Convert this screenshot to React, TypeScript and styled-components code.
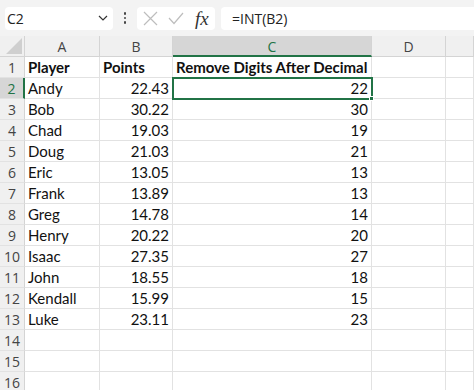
import React from "react";
import styled, { createGlobalStyle } from "styled-components";

const Global = createGlobalStyle`
  html, body { margin: 0; padding: 0; background: #ffffff; overflow: hidden; }
  body { font-family: "Lato", "Open Sans", sans-serif; }
`;

const Page = styled.div`
  width: 474px;
  height: 390px;
  overflow: hidden;
  display: flex;
  flex-direction: column;
  background: #fff;
`;

const Toolbar = styled.div`
  height: 36px;
  flex: 0 0 36px;
  background: #f3f3f3;
  display: flex;
  align-items: center;
  padding: 0 0 0 5px;
  box-sizing: border-box;
`;

const NameBox = styled.div`
  width: 108px;
  height: 23px;
  background: #fff;
  border-radius: 4px;
  display: flex;
  align-items: center;
  justify-content: space-between;
  padding: 0 5px 0 2px;
  box-sizing: border-box;
  font-family: "Open Sans", sans-serif;
  font-size: 14px;
  color: #222;
`;

const Dots = styled.div`
  width: 24px;
  display: flex;
  flex-direction: column;
  align-items: center;
  gap: 2px;
  span {
    width: 2.5px;
    height: 2.5px;
    border-radius: 50%;
    background: #444;
  }
`;

const IconBox = styled.div`
  width: 78px;
  height: 23px;
  background: #fff;
  border-radius: 4px;
  display: flex;
  align-items: center;
  padding: 0 0 0 6px;
  gap: 10px;
  box-sizing: border-box;
`;

const Fx = styled.span`
  font-family: "Liberation Serif", serif;
  font-style: italic;
  font-size: 19px;
  color: #333;
  margin-left: 1px;
  line-height: 1;
`;

const FormulaBox = styled.div`
  margin-left: 6px;
  flex: 1;
  height: 23px;
  background: #fff;
  border-radius: 4px 0 0 4px;
  display: flex;
  align-items: center;
  padding-left: 11px;
  font-family: "Open Sans", sans-serif;
  font-size: 14px;
  color: #222;
`;

const Grid = styled.div`
  display: grid;
  grid-template-columns: 25px 75px 73px 199px 74px 28px;
  grid-auto-rows: 21px;
`;

const Corner = styled.div`
  background: #f0f0f0;
  border-right: 1px solid #d4d4d4;
  border-bottom: 1px solid #d4d4d4;
  box-sizing: border-box;
  position: relative;
  svg { position: absolute; right: 2px; bottom: 2px; }
`;

const ColHead = styled.div<{ $sel?: boolean }>`
  background: ${(p) => (p.$sel ? "#d6d6d6" : "#f0f0f0")};
  border-right: 1px solid #d4d4d4;
  border-bottom: ${(p) => (p.$sel ? "2px solid #217346" : "1px solid #d4d4d4")};
  box-sizing: border-box;
  display: flex;
  align-items: center;
  justify-content: center;
  font-family: "Open Sans", sans-serif;
  font-size: 14px;
  color: ${(p) => (p.$sel ? "#217346" : "#444")};
  padding-top: ${(p) => (p.$sel ? "1px" : "0")};
`;

const RowHead = styled.div<{ $sel?: boolean }>`
  background: ${(p) => (p.$sel ? "#d6d6d6" : "#f0f0f0")};
  border-right: ${(p) => (p.$sel ? "2px solid #217346" : "1px solid #d4d4d4")};
  border-bottom: 1px solid #e2e2e2;
  box-sizing: border-box;
  display: flex;
  align-items: center;
  justify-content: center;
  font-family: "Open Sans", sans-serif;
  font-size: 14px;
  color: ${(p) => (p.$sel ? "#217346" : "#444")};
`;

const Cell = styled.div<{ $right?: boolean; $bold?: boolean; $sel?: boolean }>`
  border-right: 1px solid #e2e2e2;
  border-bottom: 1px solid #e2e2e2;
  box-sizing: border-box;
  display: flex;
  align-items: center;
  justify-content: ${(p) => (p.$right ? "flex-end" : "flex-start")};
  padding: 0 3px;
  font-family: "Lato", "Open Sans", sans-serif;
  font-size: 15px;
  font-weight: ${(p) => (p.$bold ? 700 : 400)};
  color: #111;
  white-space: nowrap;
  overflow: visible;
  position: relative;
  ${(p) =>
    p.$sel
      ? `outline: 2px solid #217346; outline-offset: -1px; z-index: 1;`
      : ""}
`;

const Handle = styled.span`
  position: absolute;
  right: -3px;
  bottom: -3px;
  width: 5px;
  height: 5px;
  background: #217346;
  border: 1px solid #fff;
  box-sizing: border-box;
`;

const data: [string, string, string][] = [
  ["Andy", "22.43", "22"],
  ["Bob", "30.22", "30"],
  ["Chad", "19.03", "19"],
  ["Doug", "21.03", "21"],
  ["Eric", "13.05", "13"],
  ["Frank", "13.89", "13"],
  ["Greg", "14.78", "14"],
  ["Henry", "20.22", "20"],
  ["Isaac", "27.35", "27"],
  ["John", "18.55", "18"],
  ["Kendall", "15.99", "15"],
  ["Luke", "23.11", "23"],
];

export default function App() {
  const rows: React.ReactNode[] = [];
  rows.push(
    <React.Fragment key="r1">
      <RowHead>1</RowHead>
      <Cell $bold>Player</Cell>
      <Cell $bold>Points</Cell>
      <Cell $bold>Remove Digits After Decimal</Cell>
      <Cell />
      <Cell />
    </React.Fragment>
  );
  data.forEach((d, i) => {
    const sel = i === 0;
    rows.push(
      <React.Fragment key={i}>
        <RowHead $sel={sel}>{i + 2}</RowHead>
        <Cell>{d[0]}</Cell>
        <Cell $right>{d[1]}</Cell>
        <Cell $right $sel={sel}>
          {d[2]}
          {sel && <Handle />}
        </Cell>
        <Cell />
        <Cell />
      </React.Fragment>
    );
  });
  for (let r = 14; r <= 16; r++) {
    rows.push(
      <React.Fragment key={"e" + r}>
        <RowHead>{r}</RowHead>
        <Cell />
        <Cell />
        <Cell />
        <Cell />
        <Cell />
      </React.Fragment>
    );
  }

  return (
    <Page>
      <Global />
      <Toolbar>
        <NameBox>
          <span>C2</span>
          <svg width="10" height="6" viewBox="0 0 10 6">
            <path d="M1 1 L5 5 L9 1" fill="none" stroke="#333" strokeWidth="1.2" />
          </svg>
        </NameBox>
        <Dots>
          <span />
          <span />
          <span />
        </Dots>
        <IconBox>
          <svg width="15" height="15" viewBox="0 0 15 15">
            <path d="M1 1 L14 14 M14 1 L1 14" stroke="#bdbdbd" strokeWidth="1.2" fill="none" />
          </svg>
          <svg width="16" height="13" viewBox="0 0 16 13">
            <path d="M1 6 L6 11.5 L15 1" stroke="#bdbdbd" strokeWidth="1.2" fill="none" />
          </svg>
          <Fx>fx</Fx>
        </IconBox>
        <FormulaBox>=INT(B2)</FormulaBox>
      </Toolbar>
      <Grid>
        <Corner>
          <svg width="16" height="16" viewBox="0 0 16 16">
            <path d="M16 0 L16 16 L0 16 Z" fill="#cfcfcf" />
          </svg>
        </Corner>
        <ColHead>A</ColHead>
        <ColHead>B</ColHead>
        <ColHead $sel>C</ColHead>
        <ColHead>D</ColHead>
        <ColHead />
        {rows}
      </Grid>
    </Page>
  );
}
